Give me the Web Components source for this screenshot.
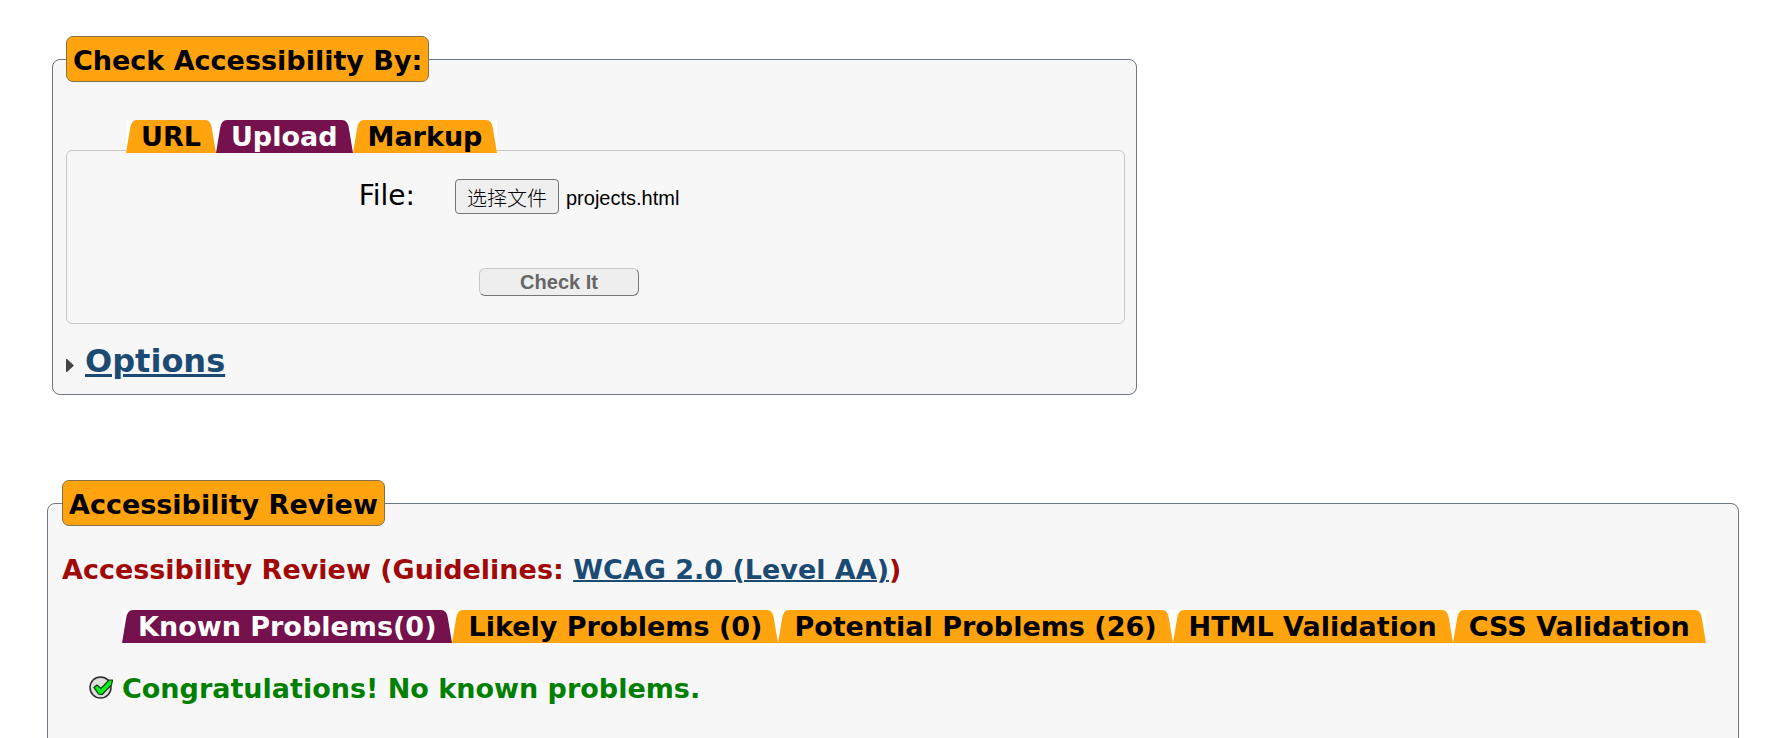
<!DOCTYPE html>
<html lang="en">
<head>
<meta charset="utf-8">
<meta name="viewport" content="width=device-width, initial-scale=1">
<title>Accessibility Checker</title>
<style>
  body {
    margin: 0;
    padding: 36px 29px 0 47px;
    background: #fff;
    color: #000;
    font: 27px/32px "DejaVu Sans", Verdana, sans-serif;
  }
  ac-panel + ac-panel { margin-top: 85px; }
  .input-panel { max-width: 1085px; margin-left: 5px; }
  .input-panel ac-tabs { margin-bottom: -3px; }
  .review-panel { --panel-bottom: 80px; --panel-gap: 28px; --panel-left: 14px; --tab-pad: 4px; }
</style>
</head>
<body>
  <ac-panel class="input-panel">
    <span slot="title">Check Accessibility By:</span>
    <ac-tabs label="Input method">
      <ac-tab>URL</ac-tab>
      <ac-tab selected>Upload</ac-tab>
      <ac-tab>Markup</ac-tab>
    </ac-tabs>
    <ac-upload-form></ac-upload-form>
    <ac-disclosure>Options</ac-disclosure>
  </ac-panel>

  <ac-panel class="review-panel">
    <span slot="title">Accessibility Review</span>
    <ac-guideline href="#wcag2-aa" name="WCAG 2.0 (Level AA)"></ac-guideline>
    <ac-tabs label="Results">
      <ac-tab selected>Known Problems(0)</ac-tab>
      <ac-tab>Likely Problems (0)</ac-tab>
      <ac-tab>Potential Problems (26)</ac-tab>
      <ac-tab>HTML Validation</ac-tab>
      <ac-tab>CSS Validation</ac-tab>
    </ac-tabs>
    <ac-success>Congratulations! No known problems.</ac-success>
  </ac-panel>

<script>
const define = (name, html, setup) => {
  const template = document.createElement('template');
  template.innerHTML = html;
  customElements.define(name, class extends HTMLElement {
    constructor() {
      super();
      this.attachShadow({ mode: 'open' }).append(template.content.cloneNode(true));
    }
    connectedCallback() {
      if (setup) setup(this, this.shadowRoot);
    }
  });
};

define('ac-panel', `
  <style>
    :host { display: block; }
    fieldset {
      margin: 0;
      min-width: 0;
      padding: var(--panel-gap, 38px) 11px var(--panel-bottom, 12px) var(--panel-left, 13px);
      border: 1px solid #6f7683;
      border-radius: 8px;
      background: #f7f7f7;
    }
    legend {
      padding: 8px 6px 4px;
      border: 1px solid #85704c;
      border-radius: 7px;
      background: #ffa30f;
      font-weight: bold;
    }
  </style>
  <fieldset><legend><slot name="title"></slot></legend><slot></slot></fieldset>`);

define('ac-tabs', `
  <style>
    :host { display: block; position: relative; padding-left: 60px; }
    div { display: flex; flex-wrap: wrap; }
  </style>
  <div role="tablist"><slot></slot></div>`,
  (host, root) => {
    root.querySelector('div').setAttribute('aria-label', host.getAttribute('label'));
  });

define('ac-tab', `
  <style>
    :host { display: block; --fill: #ffa30f; color: #000; }
    :host([selected]) { --fill: #75114d; color: #fff; }
    button {
      display: flex;
      height: 33px;
      margin: 0;
      padding: 0;
      border: 0;
      background: #fff;
      color: inherit;
      font: bold 27px/34px "DejaVu Sans", Verdana, sans-serif;
      white-space: nowrap;
      cursor: pointer;
    }
    svg { width: 12px; height: 33px; fill: var(--fill); }
    svg + span + svg { transform: scaleX(-1); }
    span { height: 33px; padding: 0 var(--tab-pad, 3px); background: var(--fill); }
  </style>
  <button type="button" role="tab">
    <svg viewBox="0 0 12 33" aria-hidden="true"><path d="M0 33 4 9Q5 0 11 0H12V33Z"/></svg>
    <span><slot></slot></span>
    <svg viewBox="0 0 12 33" aria-hidden="true"><path d="M0 33 4 9Q5 0 11 0H12V33Z"/></svg>
  </button>`,
  (host, root) => {
    root.querySelector('button').setAttribute('aria-selected', host.hasAttribute('selected'));
  });

define('ac-upload-form', `
  <style>
    :host { display: block; }
    form {
      padding: 28px 0 27px;
      border: 1px solid #c8c8c8;
      border-radius: 6px;
    }
    .row { display: flex; align-items: center; }
    label { width: 348px; text-align: right; margin-right: 40px; font-size: 28px; line-height: 32px; padding-bottom: 2px; }
    input {
      position: absolute;
      width: 1px;
      height: 1px;
      opacity: 0;
    }
    .choose {
      height: 35px;
      padding: 2px 11px 0;
      border: 1px solid #767676;
      border-radius: 4px;
      background: #efefef;
      color: #000;
      font: 300 20px/30px "Noto Sans CJK SC", sans-serif;
    }
    output { margin-left: 7px; padding-top: 2px; font: 20px/30px "Liberation Sans", Arial, sans-serif; }
    .check {
      display: block;
      width: 160px;
      height: 28px;
      margin: 54px 0 0 412px;
      padding: 0;
      border: 1px solid;
      border-color: #c8c8c8 #767676 #767676 #c8c8c8;
      border-radius: 6px;
      background: #eee;
      color: #666;
      font: bold 20px/24px "Liberation Sans", Arial, sans-serif;
    }
  </style>
  <form>
    <div class="row">
      <label for="file">File:</label>
      <input id="file" type="file" tabindex="-1">
      <button class="choose" type="button" lang="zh-CN">选择文件</button>
      <output for="file">projects.html</output>
    </div>
    <button class="check" type="button">Check It</button>
  </form>`,
  (host, root) => {
    const input = root.querySelector('input');
    root.querySelector('.choose').addEventListener('click', () => input.click());
    input.addEventListener('change', () => {
      if (input.files.length) root.querySelector('output').textContent = input.files[0].name;
    });
  });

define('ac-disclosure', `
  <style>
    :host { display: block; margin-top: 16px; }
    h2 { display: flex; align-items: center; gap: 11px; margin: 0; font: bold 32px/42px "DejaVu Sans", Verdana, sans-serif; }
    svg { width: 8px; height: 13px; margin-top: 8px; }
    a { color: #1b4a73; text-decoration-thickness: 3px; }
  </style>
  <h2>
    <svg viewBox="0 0 8 13" aria-hidden="true"><path d="M0 0H1L8 6.500 1 13H0Z" fill="#444"/></svg>
    <a href="#options"><slot></slot></a>
  </h2>`);

define('ac-guideline', `
  <style>
    :host { display: block; margin-bottom: 24px; }
    h2 { margin: 0; color: #a10808; font: bold 27px/32px "DejaVu Sans", Verdana, sans-serif; }
    a { color: #1b4a73; text-decoration-thickness: 2px; }
  </style>
  <h2>Accessibility Review (Guidelines: <a></a>)</h2>`,
  (host, root) => {
    const link = root.querySelector('a');
    link.href = host.getAttribute('href');
    link.textContent = host.getAttribute('name');
  });

define('ac-success', `
  <style>
    :host { display: flex; align-items: center; gap: 9px; margin: 30px 0 0 27px; color: #008000; font-weight: bold; }
    svg { flex: none; width: 24px; height: 23px; margin-bottom: 3px; }
  </style>
  <svg viewBox="0 0 24 23" aria-hidden="true">
    <circle cx="11.500" cy="11.500" r="10.500" fill="#dedede" stroke="#2a2a2a" stroke-width="1.500"/>
    <path d="M5 11.500 8 9 12 12.500 20 4 23.500 4 22.500 9 13 18.500 9.500 18Z" fill="#08f01c" stroke="#063a08" stroke-width="1.200"/>
  </svg>
  <span><slot></slot></span>`);
</script>
</body>
</html>
